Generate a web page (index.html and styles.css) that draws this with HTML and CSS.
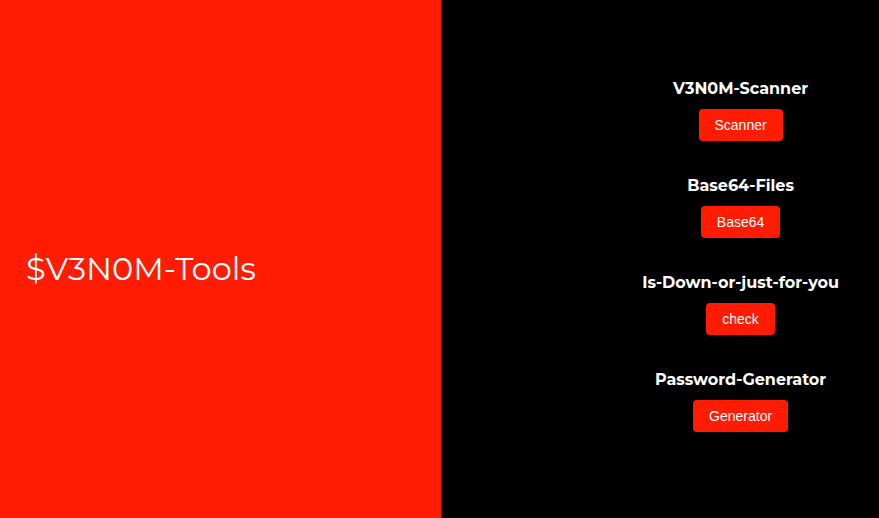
FILE: index.html
```html
<!DOCTYPE html>
<html lang="en">
<head>
<meta charset="utf-8">
<title>$V3N0M-Tools</title>
<link rel="stylesheet" href="styles.css">
</head>
<body>
<main class="split">
  <section class="brand"><h1 class="title">$V3N0M-Tools</h1></section>
  <section class="panel">
    <div class="tools">
      <article class="tool"><h2 class="name">V3N0M-Scanner</h2><button class="btn" type="button">Scanner</button></article>
      <article class="tool"><h2 class="name">Base64-Files</h2><button class="btn" type="button">Base64</button></article>
      <article class="tool"><h2 class="name">Is-Down-or-just-for-you</h2><button class="btn" type="button">check</button></article>
      <article class="tool"><h2 class="name">Password-Generator</h2><button class="btn" type="button">Generator</button></article>
    </div>
  </section>
</main>
</body>
</html>
```
FILE: styles.css
```css
* { box-sizing: border-box; }
body { margin: 0; background: #000; color: #fff; font-family: Montserrat, Inter, sans-serif; }
.split { display: grid; grid-template-columns: 441fr 438fr; min-height: 100vh; }
.brand { display: flex; align-items: center; padding: 20px 26px 0; background: #ff1c03; }
.title { margin: 0; font-size: 32px; font-weight: 400; line-height: 40px; }
.panel { display: flex; align-items: center; justify-content: flex-end; padding: 0 40px 9px; }
.tools { display: flex; flex-direction: column; gap: 33px; }
.tool { display: flex; flex-direction: column; align-items: center; gap: 8px; }
.name { margin: 0; font-size: 16px; font-weight: 700; line-height: 24px; }
.btn { height: 32px; padding: 0 16px; border: 0; border-radius: 4px; background: #ff1c03; color: #fff; font: 14px "Liberation Sans", Arial, sans-serif; }
```
